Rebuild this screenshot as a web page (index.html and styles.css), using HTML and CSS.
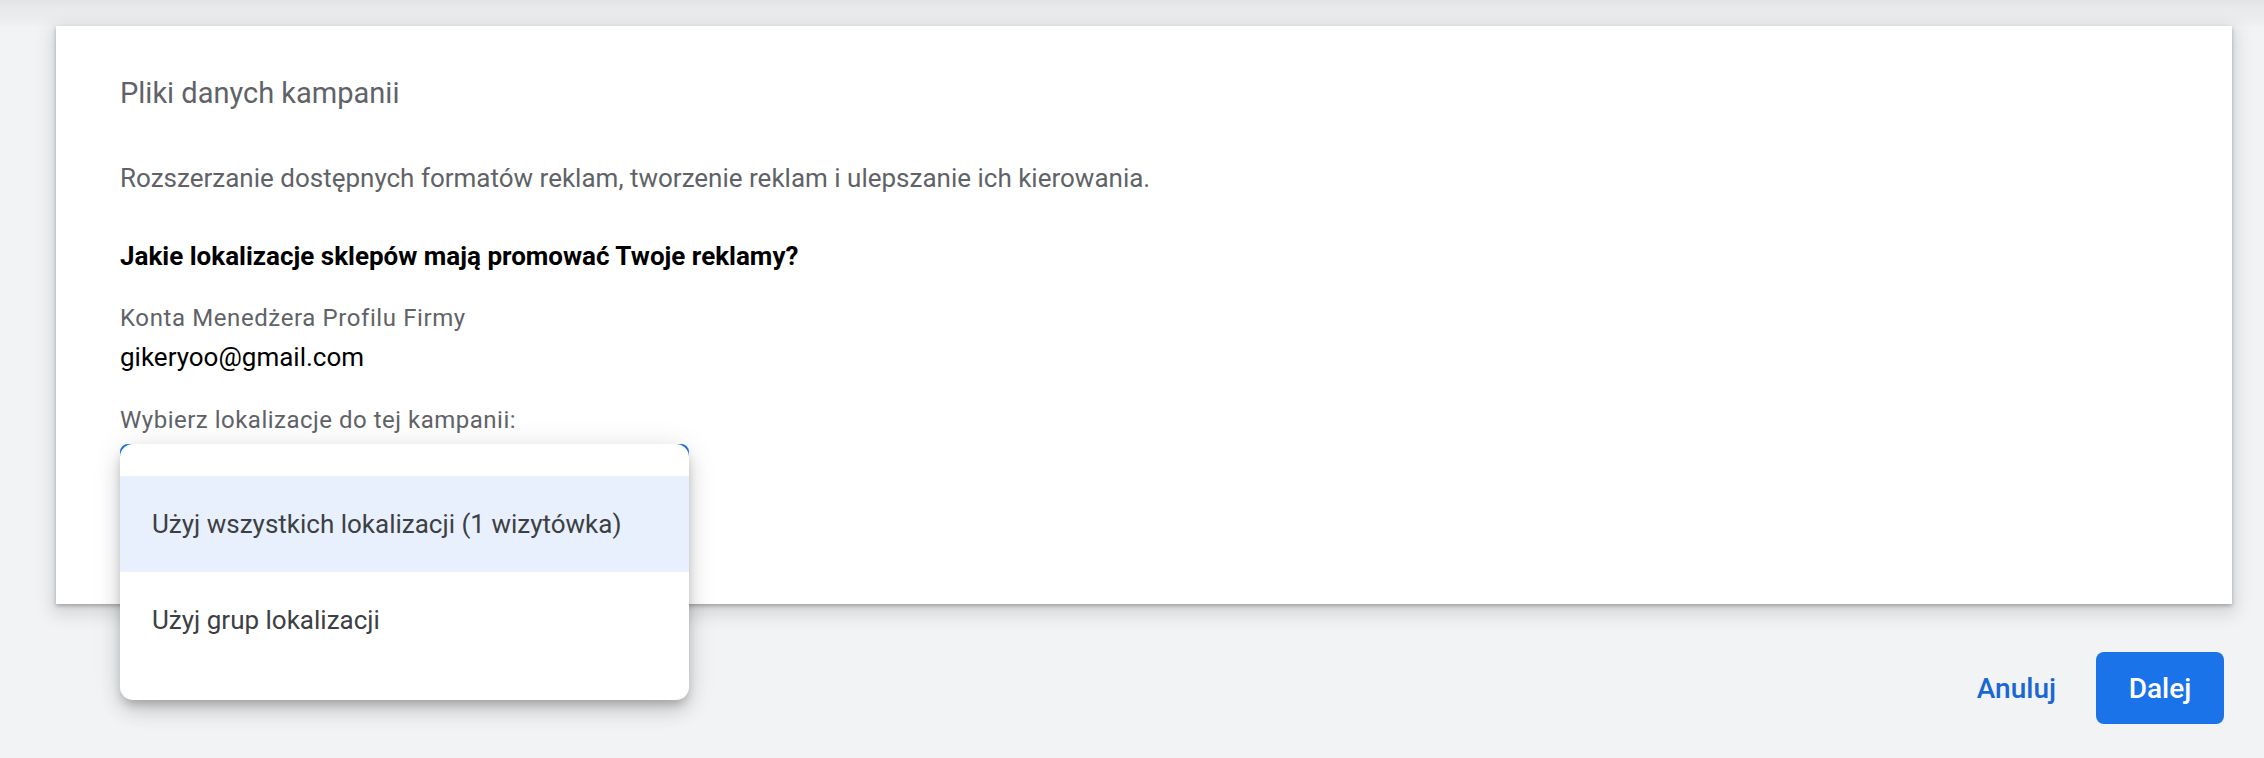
FILE: index.html
```html
<!DOCTYPE html>
<html lang="pl">
<head>
<meta charset="utf-8">
<title>Pliki danych kampanii</title>
<link rel="stylesheet" href="styles.css">
</head>
<body>
<div class="page">
  <section class="card">
    <h2 class="title">Pliki danych kampanii</h2>
    <p class="desc">Rozszerzanie dostępnych formatów reklam, tworzenie reklam i ulepszanie ich kierowania.</p>
    <h3 class="question">Jakie lokalizacje sklepów mają promować Twoje reklamy?</h3>
    <div class="acct-label">Konta Menedżera Profilu Firmy</div>
    <div class="acct-email">gikeryoo@gmail.com</div>
    <div class="pick-label">Wybierz lokalizacje do tej kampanii:</div>
    <div class="select">
      <div class="select-field"></div>
      <ul class="menu">
        <li class="option selected">Użyj wszystkich lokalizacji (1 wizytówka)</li>
        <li class="option">Użyj grup lokalizacji</li>
      </ul>
    </div>
  </section>
  <div class="actions">
    <button class="btn btn-text">Anuluj</button>
    <button class="btn btn-primary">Dalej</button>
  </div>
</div>
</body>
</html>
```

FILE: styles.css
```css
html, body {
  margin: 0;
  padding: 0;
}
body {
  background: #f1f3f4;
  font-family: Roboto, "Liberation Sans", sans-serif;
  width: 2264px;
  height: 758px;
  overflow: hidden;
  position: relative;
}
body::before {
  content: "";
  position: absolute;
  left: 0;
  right: 0;
  top: 0;
  height: 28px;
  background: linear-gradient(to bottom, #e2e3e5 0px, #e8e9eb 6px, rgba(232,233,235,0.6) 20px, rgba(241,243,244,0) 28px);
}
.page {
  position: relative;
  padding: 26px 32px 0 56px;
}
.card {
  background: #fff;
  padding: 47px 64px 48px 64px;
  box-shadow: 0 2px 4px rgba(60,64,67,0.35), 0 6px 16px 4px rgba(60,64,67,0.16);
  position: relative;
}
.title {
  margin: 0;
  font-size: 29px;
  line-height: 40px;
  font-weight: 400;
  color: #5f6368;
}
.desc {
  margin: 47px 0 0;
  font-size: 26px;
  line-height: 36px;
  color: #5f6368;
}
.question {
  margin: 42px 0 0;
  font-size: 26px;
  line-height: 36px;
  font-weight: 700;
  color: #000;
}
.acct-label {
  margin-top: 28px;
  font-size: 24px;
  line-height: 32px;
  letter-spacing: 0.6px;
  color: #5f6368;
}
.acct-email {
  margin-top: 5px;
  font-size: 26px;
  line-height: 36px;
  color: #000;
}
.pick-label {
  margin-top: 29px;
  font-size: 24px;
  line-height: 32px;
  letter-spacing: 0.5px;
  color: #5f6368;
}
.select {
  position: relative;
  margin-top: 8px;
  width: 569px;
  height: 112px;
}
.select-field {
  box-sizing: border-box;
  height: 112px;
  border: 3px solid #1a73e8;
  border-radius: 8px;
}
.menu {
  position: absolute;
  left: 0;
  top: 0;
  right: 0;
  margin: 0;
  padding: 32px 0;
  list-style: none;
  background: #fff;
  border-radius: 13px;
  box-shadow: 0 6px 10px -2px rgba(0,0,0,0.2), 0 12px 20px rgba(0,0,0,0.12), 0 2px 30px rgba(0,0,0,0.1);
  z-index: 2;
}
.option {
  height: 96px;
  padding: 0 32px;
  display: flex;
  align-items: center;
  font-size: 26px;
  color: #3c4043;
}
.option.selected {
  background: #e8f0fe;
}
.actions {
  display: flex;
  justify-content: flex-end;
  gap: 16px;
  margin-top: 48px;
  padding-right: 8px;
}
.btn {
  height: 72px;
  border: 0;
  border-radius: 8px;
  font-family: Roboto, "Liberation Sans", sans-serif;
  font-size: 28px;
  font-weight: 500;
  padding: 0 32px;
  background: transparent;
}
.btn-text {
  color: #1967d2;
  padding: 0 24px;
}
.btn-primary {
  background: #1a73e8;
  color: #fff;
  width: 128px;
  padding: 0;
}
```
